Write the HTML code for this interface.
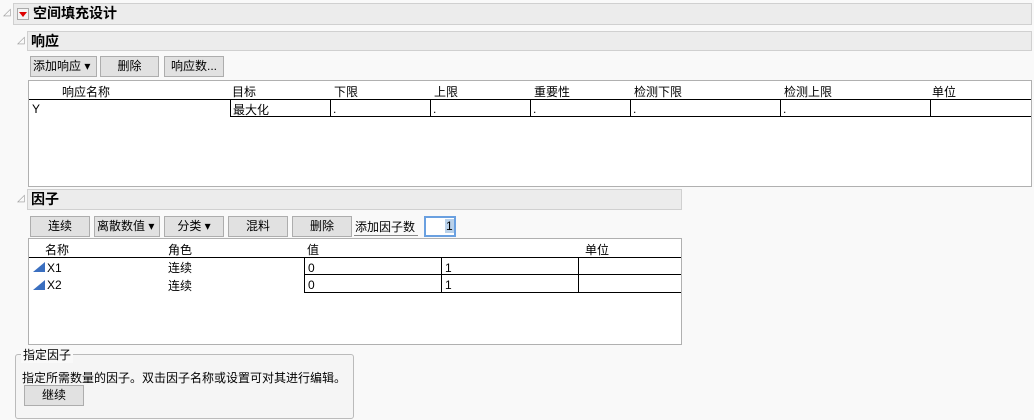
<!DOCTYPE html>
<html><head><meta charset="utf-8"><style>
body{margin:0;width:1034px;height:420px;background:#f9f9f9;position:relative;overflow:hidden;font-family:"Liberation Sans","Noto Sans CJK SC",sans-serif;font-size:12px;color:#000}
.a{position:absolute;white-space:nowrap}
.hdr{position:absolute;background:#ececec;border:1px solid #d0d0d0;box-sizing:border-box;font-weight:bold;font-size:14px;line-height:19px}
.btn{position:absolute;background:#e1e1e1;border:1px solid #adadad;box-sizing:border-box;text-align:center;line-height:19px;font-size:12px}
.tbl{position:absolute;background:#fff;border:1px solid #b0b0b0;box-sizing:border-box}
.ln{position:absolute;background:#000}
</style></head><body>
<div class="a" style="left:3px;top:7px;color:#999;font-size:10px">◿</div>
<div class="hdr" style="left:13px;top:3px;width:1019px;height:22px"></div>
<div class="a" style="left:17px;top:8px;width:12px;height:12px;border:1px solid #aaa;background:#f4f4f4;box-sizing:border-box"></div>
<div class="a" style="left:19px;top:12px;width:0;height:0;border-left:4px solid transparent;border-right:4px solid transparent;border-top:5px solid #d00"></div>
<div class="a" style="left:33px;top:4px;font-weight:bold;font-size:14px;line-height:19px">空间填充设计</div>

<div class="a" style="left:17px;top:35px;color:#999;font-size:10px">◿</div>
<div class="hdr" style="left:27px;top:31px;width:1005px;height:20px;padding-left:3px">响应</div>
<div class="btn" style="left:30px;top:56px;width:67px;height:21px;text-align:left;padding-left:2px">添加响应 ▾</div>
<div class="btn" style="left:100px;top:56px;width:59px;height:21px">删除</div>
<div class="btn" style="left:164px;top:56px;width:60px;height:21px">响应数...</div>
<div class="tbl" style="left:28px;top:80px;width:1004px;height:107px"></div>
<div class="a" style="left:62px;top:83px">响应名称</div>
<div class="a" style="left:232px;top:83px">目标</div>
<div class="a" style="left:334px;top:83px">下限</div>
<div class="a" style="left:434px;top:83px">上限</div>
<div class="a" style="left:534px;top:83px">重要性</div>
<div class="a" style="left:634px;top:83px">检测下限</div>
<div class="a" style="left:784px;top:83px">检测上限</div>
<div class="a" style="left:932px;top:83px">单位</div>
<div class="ln" style="left:29px;top:99px;width:1002px;height:1px"></div>
<div class="ln" style="left:230px;top:116px;width:801px;height:1px"></div>
<div class="ln" style="left:230px;top:99px;width:1px;height:18px"></div>
<div class="ln" style="left:330px;top:99px;width:1px;height:18px"></div>
<div class="ln" style="left:430px;top:99px;width:1px;height:18px"></div>
<div class="ln" style="left:530px;top:99px;width:1px;height:18px"></div>
<div class="ln" style="left:630px;top:99px;width:1px;height:18px"></div>
<div class="ln" style="left:780px;top:99px;width:1px;height:18px"></div>
<div class="ln" style="left:930px;top:99px;width:1px;height:18px"></div>
<div class="a" style="left:32px;top:102px">Y</div>
<div class="a" style="left:233px;top:101px">最大化</div>
<div class="a" style="left:333px;top:102px">.</div>
<div class="a" style="left:433px;top:102px">.</div>
<div class="a" style="left:533px;top:102px">.</div>
<div class="a" style="left:633px;top:102px">.</div>
<div class="a" style="left:783px;top:102px">.</div>

<div class="a" style="left:17px;top:193px;color:#999;font-size:10px">◿</div>
<div class="hdr" style="left:27px;top:189px;width:655px;height:21px;padding-left:3px">因子</div>
<div class="btn" style="left:30px;top:216px;width:60px;height:21px">连续</div>
<div class="btn" style="left:94px;top:216px;width:66px;height:21px;text-align:left;padding-left:2px">离散数值 ▾</div>
<div class="btn" style="left:164px;top:216px;width:60px;height:21px">分类 ▾</div>
<div class="btn" style="left:228px;top:216px;width:60px;height:21px">混料</div>
<div class="btn" style="left:292px;top:216px;width:60px;height:21px">删除</div>
<div class="a" style="left:355px;top:218px">添加因子数</div>
<div class="ln" style="left:354px;top:235px;width:64px;height:1px;background:#888"></div>
<div class="a" style="left:424px;top:216px;width:32px;height:21px;border:2px solid #6aa0e0;box-sizing:border-box;background:#fff"></div>
<div class="a" style="left:445px;top:219px;background:#b9d1ea;padding:0 1px">1</div>
<div class="tbl" style="left:28px;top:238px;width:654px;height:107px"></div>
<div class="a" style="left:45px;top:241px">名称</div>
<div class="a" style="left:168px;top:241px">角色</div>
<div class="a" style="left:307px;top:241px">值</div>
<div class="a" style="left:585px;top:241px">单位</div>
<div class="ln" style="left:29px;top:257px;width:652px;height:1px"></div>
<div class="ln" style="left:304px;top:274px;width:377px;height:1px"></div>
<div class="ln" style="left:304px;top:292px;width:377px;height:1px"></div>
<div class="ln" style="left:304px;top:257px;width:1px;height:36px"></div>
<div class="ln" style="left:441px;top:257px;width:1px;height:36px"></div>
<div class="ln" style="left:578px;top:257px;width:1px;height:36px"></div>
<svg class="a" style="left:33px;top:262px" width="12" height="10"><polygon points="0,10 12,10 12,0" fill="#3a6fc0"/></svg>
<svg class="a" style="left:33px;top:280px" width="12" height="10"><polygon points="0,10 12,10 12,0" fill="#3a6fc0"/></svg>
<div class="a" style="left:47px;top:261px">X1</div>
<div class="a" style="left:168px;top:259px">连续</div>
<div class="a" style="left:308px;top:261px">0</div>
<div class="a" style="left:445px;top:261px">1</div>
<div class="a" style="left:47px;top:278px">X2</div>
<div class="a" style="left:168px;top:277px">连续</div>
<div class="a" style="left:308px;top:278px">0</div>
<div class="a" style="left:445px;top:278px">1</div>

<div class="a" style="left:15px;top:354px;width:339px;height:65px;border:1px solid #bbb;border-radius:3px;box-sizing:border-box;background:#f5f5f5"></div>
<div class="a" style="left:21px;top:346px;background:#f9f9f9;padding:0 2px">指定因子</div>
<div class="a" style="left:22px;top:369px">指定所需数量的因子。双击因子名称或设置可对其进行编辑。</div>
<div class="btn" style="left:24px;top:385px;width:60px;height:21px">继续</div>
</body></html>
